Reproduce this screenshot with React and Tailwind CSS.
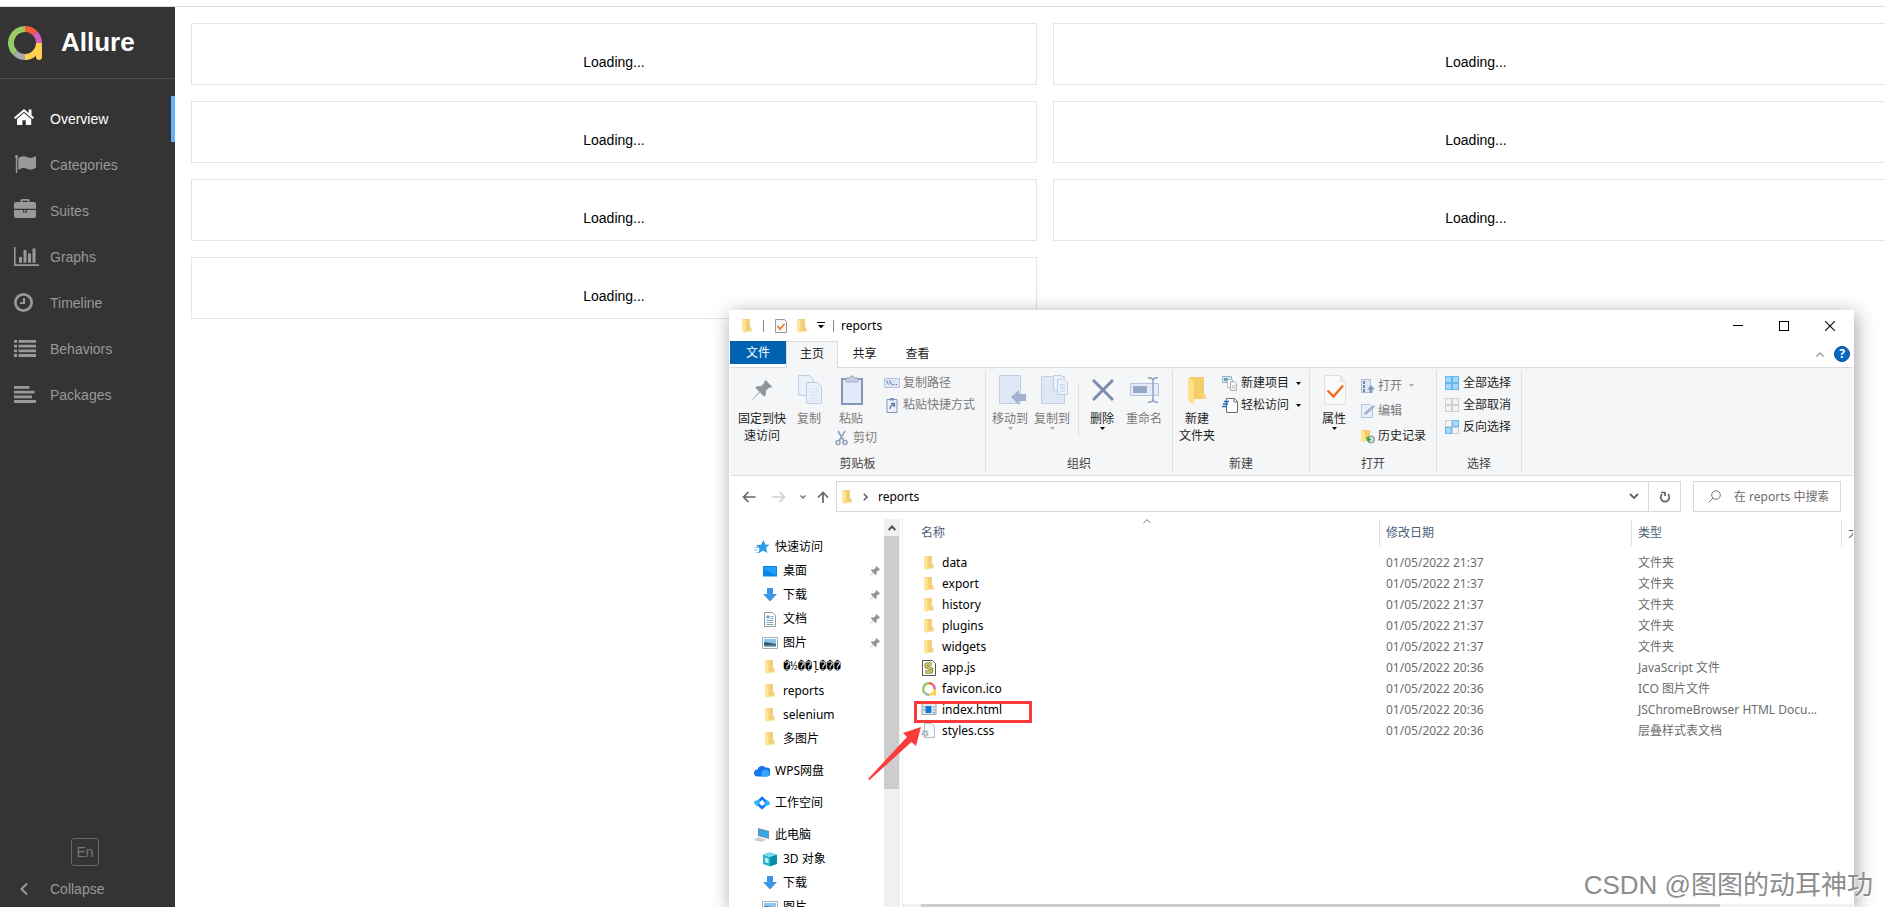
import { useState } from 'react';

// ─── Allure sidebar ───────────────────────────────────────────────────────────

function AllureLogo({ className = '' }) {
  return (
    <svg viewBox="0 0 34 34" className={className} fill="none" strokeWidth="6" aria-hidden="true">
      <path d="M7.1 26.9A14 14 0 0117 3" stroke="#97cc64" />
      <path d="M17 3a14 14 0 019.9 4.1" stroke="#fd5a3e" />
      <path d="M26.9 7.1A14 14 0 0131 17" stroke="#d35ebe" />
      <path d="M17 31a14 14 0 01-9.9-4.1" stroke="#aaa" />
      <path d="M31 17a14 14 0 01-14 14" stroke="#ffd050" />
      <path d="M31 17v14" stroke="#ffd050" />
      <circle cx="31" cy="31" r="3" fill="#ffd050" stroke="none" />
    </svg>
  );
}

const NAV_ICONS = {
  home: (
    <>
      <path d="M10 2L0 10.400l1.400 1.600L10 4.800l8.700 7.200 1.400-1.600-2.600-2.200V2.600h-2.800v3.300z" />
      <path d="M10 6l7.200 6v6h-5.400v-4.800H8.400V18H3v-6z" />
    </>
  ),
  flag: (
    <>
      <circle cx="2.500" cy="3.500" r="1.600" />
      <path d="M1.800 3.500h1.500V20H1.800z" />
      <path d="M4.300 5.200C8 3 10.500 2.800 13.500 4.300c3 1.400 5.500.5 8.500-1.200v11.600c-3 1.700-5.500 2.600-8.500 1.200-3-1.500-5.500-1.300-9.200.8z" />
    </>
  ),
  briefcase: (
    <>
      <path fillRule="evenodd" d="M6.500 3V1.500Q6.500 0 8 0h6q1.500 0 1.500 1.500V3H20q2 0 2 2v4.800H0V5q0-2 2-2zM8.200 1.700V3h5.600V1.700z" />
      <path d="M0 11h9v2.500h4V11h9v6q0 2-2 2H2q-2 0-2-2z" />
      <path d="M10 11h2v1.500h-2z" />
    </>
  ),
  chart: <path d="M0 2h1.600v17.300H25V21H0zM5 12h3v5.700H5zM9.500 5h3v12.700h-3zM14 8.500h3v9.200h-3zM18.500 3.500h3v14.200h-3z" />,
  clock: (
    <path fillRule="evenodd" d="M9.500 2a9.500 9.500 0 110 19 9.500 9.500 0 010-19zm0 2.700a6.800 6.800 0 100 13.600 6.800 6.800 0 000-13.600zM9 7h2v6H6v-1.700h3z" />
  ),
  list: (
    <path d="M0 3h3v2.800H0zM4.500 3H22v2.800H4.500zM0 7.700h3v2.800H0zM4.500 7.700H22v2.800H4.500zM0 12.400h3v2.800H0zM4.500 12.400H22v2.800H4.500zM0 17.100h3v2.800H0zM4.500 17.100H22v2.800H4.500z" />
  ),
  align: <path d="M0 3h15.500v2.800H0zM0 7.700h20.500v2.800H0zM0 12.400h18v2.800H0zM0 17.100h22v2.800H0z" />,
};

const NAV_ITEMS = [
  { label: 'Overview', icon: 'home' },
  { label: 'Categories', icon: 'flag' },
  { label: 'Suites', icon: 'briefcase' },
  { label: 'Graphs', icon: 'chart' },
  { label: 'Timeline', icon: 'clock' },
  { label: 'Behaviors', icon: 'list' },
  { label: 'Packages', icon: 'align' },
];

function Sidebar() {
  const [current, setCurrent] = useState('Overview');

  return (
    <aside className="flex w-[175px] shrink-0 flex-col bg-[#343434] text-sm text-[#999]">
      <div className="flex h-[72px] items-center gap-[19px] border-b border-[#4d4d4d] pl-2 text-white">
        <AllureLogo className="h-[34px] w-[34px]" />
        <span className="text-[26px] font-bold">Allure</span>
      </div>

      <nav className="mt-[17px] flex flex-col">
        {NAV_ITEMS.map(({ label, icon }) => (
          <a
            key={label}
            href={`#${label.toLowerCase()}`}
            onClick={() => setCurrent(label)}
            className={[
              'flex h-[46px] items-center gap-2.5 border-r-4 pl-3.5',
              current === label ? 'border-[#63b3f8] text-white' : 'border-transparent',
            ].join(' ')}
          >
            <svg viewBox="0 0 26 24" className="h-6 w-[26px]" fill="currentColor" aria-hidden="true">
              {NAV_ICONS[icon]}
            </svg>
            {label}
          </a>
        ))}
      </nav>

      <div className="mt-auto flex flex-col pb-1.5">
        <button type="button" className="ml-[71px] h-7 w-7 rounded-[3px] border border-[#6a6a6a] text-[#777]">
          En
        </button>
        <button type="button" className="mt-2.5 flex h-[25px] items-center gap-[22px] pl-5">
          <svg viewBox="0 0 8 12" className="h-3 w-2" fill="none" stroke="currentColor" strokeWidth="2" aria-hidden="true">
            <path d="M7 .5L1.500 6 7 11.500" />
          </svg>
          Collapse
        </button>
      </div>
    </aside>
  );
}

// ─── Explorer icons ───────────────────────────────────────────────────────────

function Folder({ className = 'h-4 w-4' }) {
  return (
    <svg viewBox="0 0 16 16" className={className} aria-hidden="true">
      <path d="M4 1h7v8l1.500.500V13.500H5z" fill="#f3d077" />
      <path d="M3 1l4 1.500v11L6 15l-3-1.500z" fill="#ffe59a" />
      <path d="M6 2.500h1.200v11L6 15z" fill="#f9dc8a" />
    </svg>
  );
}

function Pin({ className, color = '#8e979e' }) {
  return (
    <svg viewBox="0 0 20 20" className={className} fill={color} aria-hidden="true">
      <path d="M13.500 0L20 6.500l-1.200 1.200-1.600-.2-3.400 3.600.1 3.800-1.700 1.700-4.300-4.300L1.200 19 0 20l.9-1.400 6.400-6.800-4-4L5 6.100l3.900.2 3.500-3.500-.2-1.500z" />
    </svg>
  );
}

function Caret({ faded = false }) {
  return (
    <svg viewBox="0 0 5 3" className={faded ? 'h-[3px] w-[5px] text-[#aaa]' : 'h-[3px] w-[5px] text-black'} fill="currentColor" aria-hidden="true">
      <path d="M0 0h5L2.500 3z" />
    </svg>
  );
}

function DownArrow() {
  return (
    <svg viewBox="0 0 16 16" className="h-4 w-4" aria-hidden="true">
      <path d="M5 1h6v6h4l-7 7.500L1 7h4z" fill="#3b97e3" />
    </svg>
  );
}

function Picture() {
  return (
    <svg viewBox="0 0 16 16" className="h-4 w-4" aria-hidden="true">
      <path d="M.5 2.500h15v11H.5z" fill="#fff" stroke="#a3adb3" />
      <path d="M2 4h12v8H2z" fill="#8fc4ee" />
      <path d="M2 7.500c4-1 8 1 12 1.500v3H2z" fill="#335f6b" />
      <path d="M2 10.500h12V12H2z" fill="#7eb0c2" />
    </svg>
  );
}

const TREE_ICONS = {
  folder: <Folder />,
  down: <DownArrow />,
  picture: <Picture />,
  star: (
    <svg viewBox="0 0 16 16" className="h-4 w-4" aria-hidden="true">
      <path d="M9.500 1l1.700 4.500 4.300.3-3.400 3 1.200 5.200L9 11.500l-4.500 3 1-4.700L2 6.200l5-.5z" fill="#2b9be8" />
      <path d="M1 8.500h4M0 11h4M2 13.500h3" stroke="#8dcbf5" />
    </svg>
  ),
  desktop: (
    <svg viewBox="0 0 16 16" className="h-4 w-4" aria-hidden="true">
      <path d="M1 3h14v10.500H1z" fill="#0a86e0" />
      <path d="M2 4h12v8.500L2 6z" fill="#1fa1ff" />
    </svg>
  ),
  document: (
    <svg viewBox="0 0 16 16" className="h-4 w-4" aria-hidden="true">
      <path d="M2.500 1.500h8l3 3v11h-11z" fill="#fff" stroke="#929b9f" />
      <path d="M4.500 4.500h3v3h-3z" fill="#5c9fcd" />
      <path d="M8.500 5.500h3M8.500 7.500h3M4.500 9.500h7M4.500 11.500h7M4.500 13.500h7" stroke="#7ea4bd" />
    </svg>
  ),
  cloud: (
    <svg viewBox="0 0 16 16" className="h-4 w-4" aria-hidden="true">
      <path d="M3.500 13.500a3.500 3.500 0 010-7 4.500 4.500 0 018-2 4.600 4.600 0 012 9z" fill="#1976ee" />
      <path d="M8 13.500c-2-4 1-7.500 4.500-6.500a3.400 3.400 0 01.5 6.500z" fill="#38a6ff" />
    </svg>
  ),
  workspace: (
    <svg viewBox="0 0 16 16" className="h-4 w-4" fill="none" strokeWidth="2.600" aria-hidden="true">
      <path d="M8 3l5 5-5 5-5-5z" stroke="#1577ee" />
      <path d="M5.500 5.500L1 7.500l3 3M10.500 10.500L15 8.500l-3-3" stroke="#35b9ff" />
    </svg>
  ),
  computer: (
    <svg viewBox="0 0 16 16" className="h-4 w-4" aria-hidden="true">
      <path d="M4 1l11 3v8L4 9z" fill="#7f8c95" />
      <path d="M5 2l9 2.700v6L5 8.200z" fill="#2ea8f0" />
      <path d="M4 10l8 2.500-4 2.500-8-2z" fill="#c8ced2" />
    </svg>
  ),
  cube: (
    <svg viewBox="0 0 16 16" className="h-4 w-4" aria-hidden="true">
      <path d="M8 1l7 2.500L8 6 1 3.500z" fill="#7ed8e8" />
      <path d="M1 3.500L8 6v9.500L1 13z" fill="#29b5cf" />
      <path d="M15 3.500L8 6v9.500l7-2.500z" fill="#0b8ba8" />
      <path d="M3 6.500l3.500 1.200v4.500L3 11z" fill="#bfeef5" />
    </svg>
  ),
};

const FILE_ICONS = {
  folder: <Folder />,
  favicon: <AllureLogo className="h-3.5 w-3.5" />,
  script: (
    <svg viewBox="0 0 16 16" className="h-4 w-4" aria-hidden="true">
      <path d="M1.500.500h10l3 3v12h-13z" fill="#fff" stroke="#555" />
      <path d="M11 4H6.500c-2 0-2 3 0 3.500l3 1c2 .5 1.500 3.500-.5 3.500H4" fill="none" stroke="#6d6d30" strokeWidth="3.200" />
      <path d="M11 4H6.500c-2 0-2 3 0 3.500l3 1c2 .5 1.500 3.500-.5 3.500H4" fill="none" stroke="#e0d867" strokeWidth="1.600" />
    </svg>
  ),
  html: (
    <svg viewBox="0 0 16 16" className="h-4 w-4" aria-hidden="true">
      <path d="M1 1.500h14v11H1z" fill="#e6eaec" stroke="#9aa5ab" />
      <path d="M4.500 4h6v7h-6z" fill="#0a78dc" />
      <path d="M2 5h2M2 8h2M12 5h2M12 8h2M12 10.500h2" stroke="#8b979e" />
    </svg>
  ),
  css: (
    <svg viewBox="0 0 16 16" className="h-4 w-4" aria-hidden="true">
      <path d="M3.500.500h7l3 3v11h-10z" fill="#f9fafa" stroke="#b9bdc0" />
      <circle cx="4" cy="10.500" r="2.500" fill="none" stroke="#a9b6bf" strokeWidth="2" strokeDasharray="2 1" />
      <circle cx="4" cy="10.500" r="2" fill="none" stroke="#a9b6bf" />
    </svg>
  ),
};

// ─── Title bar and tabs ───────────────────────────────────────────────────────

function TitleBar() {
  return (
    <div className="flex h-[31px] items-center pl-[9px]">
      <Folder />
      <span className="ml-2 h-3 w-px bg-[#8a8a8a]" />
      <svg viewBox="0 0 12 14" className="ml-[11px] h-3.5 w-3" fill="none" aria-hidden="true">
        <path d="M.5.500h9l2 2v11H.5z" fill="#f7f7f7" stroke="#96999b" />
        <path d="M2.500 7l2.500 3 4.500-5" stroke="#f26a2e" strokeWidth="1.500" />
      </svg>
      <Folder className="ml-[7px] h-4 w-4" />
      <svg viewBox="0 0 8 7" className="ml-[7px] h-[7px] w-2" fill="#000" aria-hidden="true">
        <path d="M0 0h8v1H0zM1 3h6L4 6.500z" />
      </svg>
      <span className="ml-2 h-3 w-px bg-[#8a8a8a]" />
      <span className="ml-[7px]">reports</span>

      <div className="ml-auto flex h-full">
        <button type="button" aria-label="最小化" className="flex w-[46px] items-center justify-center">
          <span className="h-px w-2.5 bg-black" />
        </button>
        <button type="button" aria-label="最大化" className="flex w-[46px] items-center justify-center">
          <span className="h-2.5 w-2.5 border border-black" />
        </button>
        <button type="button" aria-label="关闭" className="flex w-[46px] items-center justify-center">
          <svg viewBox="0 0 10 10" className="h-2.5 w-2.5" stroke="#000" strokeWidth="1.100" aria-hidden="true">
            <path d="M0 0l10 10M10 0L0 10" />
          </svg>
        </button>
      </div>
    </div>
  );
}

function TabBar() {
  return (
    <div className="flex h-[26px] items-start text-[#222]">
      <button type="button" className="h-[23px] w-14 bg-[#0063b1] text-white">文件</button>
      <button type="button" className="relative -mb-px h-[27px] w-[52px] border border-b-0 border-[#dadbdc] bg-[#f5f6f7] pb-0.5">主页</button>
      <button type="button" className="h-[25px] w-[53px]">共享</button>
      <button type="button" className="h-[25px] w-[53px]">查看</button>
      <div className="ml-auto flex h-[26px] items-center gap-2.5 pr-[3px]">
        <button type="button" aria-label="最小化功能区">
          <svg viewBox="0 0 8 5" className="h-[5px] w-2" fill="none" stroke="#999" strokeWidth="1.300" aria-hidden="true">
            <path d="M.5 4.500L4 1l3.500 3.500" />
          </svg>
        </button>
        <button type="button" aria-label="帮助" className="h-4 w-4 rounded-full border border-[#084f95] bg-[#0668c4] text-xs leading-[14px] font-bold text-white">
          ?
        </button>
      </div>
    </div>
  );
}

// ─── Ribbon ───────────────────────────────────────────────────────────────────

function Group({ label, className = '', children }) {
  return (
    <section className={`flex h-[103px] shrink-0 flex-col border-r border-[#dfe0e2] ${className}`}>
      <div className="flex flex-1 items-start">{children}</div>
      <h2 className="pb-px text-center leading-4 text-[#444]">{label}</h2>
    </section>
  );
}

function BigButton({ icon, disabled = false, menu = false, className = 'w-[42px]', children }) {
  return (
    <button
      type="button"
      disabled={disabled}
      className={[
        'flex shrink-0 flex-col items-center pt-1 leading-[17px]',
        disabled ? 'text-[#7a7a7a]' : 'text-[#1e1e1e]',
        className,
      ].join(' ')}
    >
      <span className="flex h-9 items-center pb-1">{icon}</span>
      <span className="whitespace-nowrap">{children}</span>
      {menu && <Caret faded={disabled} />}
    </button>
  );
}

function SmallButton({ icon, disabled = false, menu = false, className = 'h-[22px]', children }) {
  return (
    <button
      type="button"
      disabled={disabled}
      className={[
        'flex items-center gap-[3px] whitespace-nowrap',
        disabled ? 'text-[#7a7a7a]' : 'text-[#1e1e1e]',
        className,
      ].join(' ')}
    >
      <svg viewBox="0 0 16 16" className="h-4 w-4" fill="none" aria-hidden="true">
        {icon}
      </svg>
      {children}
      {menu && <span className="pl-1"><Caret faded={disabled} /></span>}
    </button>
  );
}

function Tile({ on }) {
  const cells = [[1, 1], [8, 1], [1, 8], [8, 8]];
  return cells.map(([x, y], i) => (
    <rect
      key={i}
      x={x + 0.5}
      y={y + 0.5}
      width="6"
      height="6"
      fill={on[i] ? '#a5d8ff' : '#f3f3f3'}
      stroke={on[i] ? '#67b7ef' : '#cfcfcf'}
    />
  ));
}

function Ribbon() {
  return (
    <div className="flex h-[109px] overflow-hidden border-y border-[#dadbdc] bg-[#f5f6f7] pt-0.5">
      <Group label="剪贴板" className="w-64">
        <BigButton className="ml-2 w-12" icon={<Pin className="h-5 w-5" />}>
          固定到快<br />速访问
        </BigButton>
        <BigButton
          disabled
          className="ml-1 w-[38px]"
          icon={
            <svg viewBox="0 0 24 30" className="ml-0.5 h-[30px] w-6" fill="#eaf1fb" stroke="#bccde4" aria-hidden="true">
              <path d="M.5.500h11l4 4v16H.5z" />
              <path d="M8.500 7.500h11l4 4v17h-15z" />
              <path d="M11 14h10M11 17h10M11 20h10M11 23h10M11 26h10" stroke="#d3dff0" />
            </svg>
          }
        >
          复制
        </BigButton>
        <div className="ml-1.5 w-[50px]">
          <BigButton
            disabled
            className="w-[34px]"
            icon={
              <svg viewBox="0 0 22 30" className="ml-0.5 h-[30px] w-[22px]" aria-hidden="true">
                <path d="M1 4h20v25H1z" fill="#e3ebfa" stroke="#8195b8" strokeWidth="2" />
                <path d="M5 3h3l2-2h2l2 2h3v4H5z" fill="#c5d0e0" stroke="#9facc2" />
              </svg>
            }
          >
            粘贴
          </BigButton>
          <SmallButton
            disabled
            icon={
              <g stroke="#8fa0bb" strokeWidth="1.600">
                <path d="M4 1l6 10M11 1L5 11" />
                <circle cx="4" cy="12.500" r="2" />
                <circle cx="11" cy="12.500" r="2" />
              </g>
            }
          >
            剪切
          </SmallButton>
        </div>
        <div className="mt-0.5 flex flex-col">
          <SmallButton
            disabled
            icon={
              <>
                <path d="M.5 3.500h15v9H.5z" fill="#dce6f5" stroke="#b6c4d9" />
                <path d="M2.500 5.500l2 4M5.500 5.500l2 4M8.500 9.500h1.500M11.500 9.500H13" stroke="#5d7596" />
              </>
            }
          >
            复制路径
          </SmallButton>
          <SmallButton
            disabled
            icon={
              <>
                <path d="M3 2.500h10v13H3z" fill="#eef3fb" stroke="#8195b8" />
                <path d="M6 1h4v2.500H6z" fill="#8195b8" />
                <path d="M6 12c0-3 1-4 4-4M7 6.500h3.500V10" stroke="#5d7fae" strokeWidth="1.300" />
              </>
            }
          >
            粘贴快捷方式
          </SmallButton>
        </div>
      </Group>

      <Group label="组织" className="w-[187px]">
        <BigButton
          disabled
          menu
          className="ml-[3px] w-[42px]"
          icon={
            <svg viewBox="0 0 28 30" className="ml-1.5 h-[30px] w-7" aria-hidden="true">
              <path d="M.5.500h21v28H.5z" fill="#dde7f6" stroke="#c3d0e3" />
              <path d="M12 22l8-7v4h7v7h-7v4z" fill="#a0b2cf" />
            </svg>
          }
        >
          移动到
        </BigButton>
        <BigButton
          disabled
          menu
          icon={
            <svg viewBox="0 0 28 30" className="ml-1.5 h-[30px] w-7" fill="#eaf1fb" stroke="#c0cfe5" aria-hidden="true">
              <path d="M.5 1.500h23v27H.5z" fill="#dde7f6" />
              <path d="M12.500.500h8l3 3v12h-11z" />
              <path d="M16.500 4.500h7l3 3v12h-10zM19 10h5M19 13h5M19 16h5" />
            </svg>
          }
        >
          复制到
        </BigButton>
        <span className="mt-[13px] ml-[5px] h-[54px] w-px shrink-0 bg-[#dfe0e2]" />
        <BigButton
          menu
          className="ml-0.5 w-[42px]"
          icon={
            <svg viewBox="0 0 22 22" className="ml-0.5 h-[22px] w-[22px]" stroke="#7b8eb0" strokeWidth="3" aria-hidden="true">
              <path d="M1 1l20 20M21 1L1 21" />
            </svg>
          }
        >
          删除
        </BigButton>
        <BigButton
          disabled
          icon={
            <svg viewBox="0 0 30 26" className="ml-0.5 h-[26px] w-[30px]" fill="none" aria-hidden="true">
              <path d="M.5 6.500h28v12H.5z" fill="#e4ecf9" stroke="#b5c4dc" />
              <path d="M3 9h14v7H3z" fill="#96a9c8" />
              <path d="M18 .8c3 0 5 .7 5 2.700v19c0 2-2 2.700-5 2.700M28 .8c-3 0-5 .7-5 2.700v19c0 2 2 2.700 5 2.700" stroke="#8fa2c2" strokeWidth="1.500" />
            </svg>
          }
        >
          重命名
        </BigButton>
      </Group>

      <Group label="新建" className="w-[137px]">
        <BigButton
          className="ml-[3px] w-[42px]"
          icon={
            <svg viewBox="0 0 20 28" className="h-7 w-5" aria-hidden="true">
              <path d="M3 1h14v17l2 1v4H5z" fill="#f4cd68" />
              <path d="M1 1l6 5v20l-1 2-5-4z" fill="#ffe08a" />
              <path d="M15 17l4 2v4h-4z" fill="#f8d981" />
            </svg>
          }
        >
          新建<br />文件夹
        </BigButton>
        <div className="mt-0.5 ml-1 flex flex-col">
          <SmallButton
            menu
            icon={
              <>
                <path d="M.5 1.500h9v6h-9z" fill="#d5e9f5" stroke="#9fb5bb" />
                <path d="M2 3h4v3H2z" fill="#5fa3b0" />
                <path d="M5.500 4.500h5v8h-5z" fill="#fff" stroke="#b5bcc0" />
                <path d="M8.500 6.500h4l2 2v7h-6z" fill="#f4f7f9" stroke="#a8b0b5" />
                <path d="M10 11h3M10 13h3" stroke="#b2b8bc" />
              </>
            }
          >
            新建项目
          </SmallButton>
          <SmallButton
            menu
            icon={
              <>
                <path d="M4.500 1.500h8l3 3v11h-11z" fill="#fff" stroke="#6e6e6e" />
                <path d="M12 1.500V5h3.500" stroke="#6e6e6e" />
                <path d="M2 4.500h5M1 7h5M0 9.500h5" stroke="#1c6db5" strokeWidth="1.300" />
              </>
            }
          >
            轻松访问
          </SmallButton>
        </div>
      </Group>

      <Group label="打开" className="w-[127px]">
        <BigButton
          menu
          className="ml-[3px] w-[42px]"
          icon={
            <svg viewBox="0 0 22 30" className="ml-0.5 h-[30px] w-[22px]" fill="none" aria-hidden="true">
              <path d="M.5.500h16l5 6v23H.5z" fill="#fafafa" stroke="#e0e0e0" />
              <path d="M16.500.500v6h5" fill="#ececec" stroke="#e0e0e0" />
              <path d="M3.500 15.500l6 6L19 10.500" stroke="#f26a1e" strokeWidth="2.400" />
            </svg>
          }
        >
          属性
        </BigButton>
        <div className="mt-[3px] ml-1 flex flex-col">
          <SmallButton
            disabled
            menu
            className="h-[25px]"
            icon={
              <>
                <path d="M2.500 1.500h9v13h-9z" fill="#e1e9f5" stroke="#a9b8cf" />
                <path d="M4 3h2v3H4zM4 7h2v3H4zM4 11h2v3H4z" fill="#6c83a8" />
                <path d="M12 7l4 4.500h-2.500V15h-3v-3.500H8z" fill="#8599bb" />
              </>
            }
          >
            打开
          </SmallButton>
          <SmallButton
            disabled
            className="h-[25px]"
            icon={
              <>
                <path d="M2.500 1.500h8l3 3v10h-11z" fill="#e8effa" stroke="#b5c5de" />
                <path d="M5 12l1-3 8.500-7L16 3.500 8 11z" fill="#9fb1cf" />
              </>
            }
          >
            编辑
          </SmallButton>
          <SmallButton
            className="h-[25px]"
            icon={
              <>
                <path d="M3 2h8v11H4z" fill="#f3cd6c" />
                <path d="M2 2l4 2v11l-4-2z" fill="#ffe391" />
                <circle cx="12" cy="11.500" r="4" fill="#9aa6a8" />
                <circle cx="12" cy="11.500" r="2.400" fill="#dfe6e6" />
                <path d="M7 10l3-2v2.500h2v2h-2V15z" fill="#26a83d" />
              </>
            }
          >
            历史记录
          </SmallButton>
        </div>
      </Group>

      <Group label="选择" className="w-[85px]">
        <div className="mt-0.5 ml-[7px] flex flex-col">
          <SmallButton icon={<Tile on={[true, true, true, true]} />}>全部选择</SmallButton>
          <SmallButton icon={<Tile on={[false, false, false, false]} />}>全部取消</SmallButton>
          <SmallButton icon={<Tile on={[false, true, true, false]} />}>反向选择</SmallButton>
        </div>
      </Group>
    </div>
  );
}

// ─── Address bar ──────────────────────────────────────────────────────────────

function AddressBar() {
  return (
    <div className="flex h-[43px] items-start pt-[5px] pr-3">
      <div className="flex h-[31px] w-[106px] shrink-0 items-center pl-3">
        <button type="button" aria-label="返回">
          <svg viewBox="0 0 14 12" className="h-3 w-3.5" fill="none" stroke="#666" strokeWidth="1.700" aria-hidden="true">
            <path d="M13.500 6H1.500M6.500 1l-5 5 5 5" />
          </svg>
        </button>
        <button type="button" aria-label="前进" className="ml-4">
          <svg viewBox="0 0 14 12" className="h-3 w-3.5" fill="none" stroke="#d0d0d0" strokeWidth="1.700" aria-hidden="true">
            <path d="M.5 6h12M7.500 1l5 5-5 5" />
          </svg>
        </button>
        <button type="button" aria-label="最近浏览的位置" className="ml-3.5">
          <svg viewBox="0 0 6 4" className="h-1 w-1.5" fill="none" stroke="#777" strokeWidth="1.500" aria-hidden="true">
            <path d="M.5.500L3 3 5.500.500" />
          </svg>
        </button>
        <button type="button" aria-label="上移" className="ml-[11px]">
          <svg viewBox="0 0 12 12" className="h-3 w-3" fill="none" stroke="#666" strokeWidth="1.700" aria-hidden="true">
            <path d="M6 12V1.500M1 6.500l5-5 5 5" />
          </svg>
        </button>
      </div>

      <div className="flex h-[31px] flex-1 items-center border border-[#d9d9d9]">
        <Folder className="ml-0.5 h-4 w-4" />
        <svg viewBox="0 0 5 8" className="ml-2 h-2 w-[5px]" fill="none" stroke="#666" strokeWidth="1.600" aria-hidden="true">
          <path d="M.8.800L4 4 .8 7.200" />
        </svg>
        <span className="ml-2.5">reports</span>
        <button type="button" aria-label="以前的位置" className="mr-[9px] ml-auto">
          <svg viewBox="0 0 10 7" className="h-[7px] w-2.5" fill="none" stroke="#666" strokeWidth="1.900" aria-hidden="true">
            <path d="M1 1l4 4 4-4" />
          </svg>
        </button>
        <button type="button" aria-label="刷新" className="flex h-full w-8 items-center justify-center border-l border-[#d9d9d9]">
          <svg viewBox="0 0 12 12" className="h-3 w-3" fill="none" stroke="#666" strokeWidth="1.700" aria-hidden="true">
            <path d="M9 3.200A4.300 4.300 0 113 3.200" />
            <path d="M2 1.500h4.500M6 1v4" />
          </svg>
        </button>
      </div>

      <label className="ml-3 flex h-[31px] w-[148px] items-center border border-[#d9d9d9] pl-3.5">
        <svg viewBox="0 0 13 13" className="h-[13px] w-[13px] shrink-0" fill="none" stroke="#777" aria-hidden="true">
          <circle cx="8" cy="5" r="4.300" />
          <path d="M5 8L.5 12.500" />
        </svg>
        <input
          type="search"
          aria-label="搜索"
          placeholder="在 reports 中搜索"
          className="ml-[13px] w-full min-w-0 bg-transparent outline-none placeholder:text-[#6d6d6d]"
        />
      </label>
    </div>
  );
}

// ─── Folder tree ──────────────────────────────────────────────────────────────

const TREE = [
  {
    label: '快速访问',
    icon: 'star',
    children: [
      { label: '桌面', icon: 'desktop', pinned: true },
      { label: '下载', icon: 'down', pinned: true },
      { label: '文档', icon: 'document', pinned: true },
      { label: '图片', icon: 'picture', pinned: true },
      { label: '\uFFFD½\uFFFD\uFFFDļ\uFFFD\uFFFD\uFFFD', icon: 'folder', garbled: true },
      { label: 'reports', icon: 'folder' },
      { label: 'selenium', icon: 'folder' },
      { label: '多图片', icon: 'folder' },
    ],
  },
  { label: 'WPS网盘', icon: 'cloud', children: [] },
  { label: '工作空间', icon: 'workspace', children: [] },
  {
    label: '此电脑',
    icon: 'computer',
    children: [
      { label: '3D 对象', icon: 'cube' },
      { label: '下载', icon: 'down' },
      { label: '图片', icon: 'picture' },
    ],
  },
];

function FolderTree() {
  return (
    <nav className="flex w-[154px] shrink-0 flex-col gap-2 overflow-hidden pt-4">
      {TREE.map((root) => (
        <div key={root.label} className="shrink-0">
          <button type="button" className="flex h-6 w-full items-center gap-[5px] pl-6">
            {TREE_ICONS[root.icon]}
            {root.label}
          </button>
          {root.children.map((item) => (
            <button key={item.label} type="button" className="flex h-6 w-full items-center gap-[5px] pr-1 pl-8">
              {TREE_ICONS[item.icon]}
              <span className={item.garbled ? "font-['Liberation_Mono',monospace]" : ''}>{item.label}</span>
              {item.pinned && <Pin className="ml-auto h-[11px] w-[11px]" />}
            </button>
          ))}
        </div>
      ))}
    </nav>
  );
}

// ─── File list ────────────────────────────────────────────────────────────────

const FILES = [
  { name: 'data', icon: 'folder', date: '01/05/2022 21:37', type: '文件夹' },
  { name: 'export', icon: 'folder', date: '01/05/2022 21:37', type: '文件夹' },
  { name: 'history', icon: 'folder', date: '01/05/2022 21:37', type: '文件夹' },
  { name: 'plugins', icon: 'folder', date: '01/05/2022 21:37', type: '文件夹' },
  { name: 'widgets', icon: 'folder', date: '01/05/2022 21:37', type: '文件夹' },
  { name: 'app.js', icon: 'script', date: '01/05/2022 20:36', type: 'JavaScript 文件' },
  { name: 'favicon.ico', icon: 'favicon', date: '01/05/2022 20:36', type: 'ICO 图片文件' },
  { name: 'index.html', icon: 'html', date: '01/05/2022 20:36', type: 'JSChromeBrowser HTML Docu...' },
  { name: 'styles.css', icon: 'css', date: '01/05/2022 20:36', type: '层叠样式表文档' },
];

function HeadCell({ first = false, children }) {
  return (
    <th className="h-[33px] p-0 pb-1.5 text-left font-normal">
      <div
        className={[
          'h-[27px] overflow-hidden leading-[27px] whitespace-nowrap',
          first ? 'pl-[18px]' : 'border-l border-[#e2e2e2] pl-1.5',
        ].join(' ')}
      >
        {children}
      </div>
    </th>
  );
}

function FileList() {
  return (
    <div className="relative ml-0.5 flex min-w-0 flex-1 flex-col border-l border-[#f0f0f0]">
      <table className="w-full table-fixed border-collapse">
        <colgroup>
          <col />
          <col className="w-[252px]" />
          <col className="w-[210px]" />
          <col className="w-3" />
        </colgroup>
        <thead className="text-[#4c607a]">
          <tr>
            <HeadCell first>名称</HeadCell>
            <HeadCell>修改日期</HeadCell>
            <HeadCell>类型</HeadCell>
            <HeadCell>大小</HeadCell>
          </tr>
        </thead>
        <tbody className="text-[#6d6d6d]">
          {FILES.map((file) => (
            <tr key={file.name} className="h-[21px]">
              <td className="p-0 pl-[18px]">
                <span className="flex items-center gap-[5px] text-black">
                  <span className="flex h-4 w-4 items-center justify-center">{FILE_ICONS[file.icon]}</span>
                  {file.name}
                </span>
              </td>
              <td className="p-0 pl-[7px]">{file.date}</td>
              <td className="p-0 pl-[7px] whitespace-nowrap">{file.type}</td>
              <td className="p-0" />
            </tr>
          ))}
        </tbody>
      </table>

      {/* Sort direction marker on the name column */}
      <svg viewBox="0 0 8 5" className="absolute top-0 left-[240px] h-[5px] w-2" fill="none" stroke="#777" aria-hidden="true">
        <path d="M.5 4L4 .700 7.500 4" />
      </svg>

      <div className="mt-auto flex h-[3px] bg-[#f0f0f0] pl-[18px]">
        <span className="w-6/7 bg-[#cdcdcd]" />
      </div>
    </div>
  );
}

// ─── Explorer window ──────────────────────────────────────────────────────────

function Explorer() {
  return (
    <div className="absolute top-[310px] right-[31px] bottom-0 left-[729px] flex flex-col bg-white px-px font-['Noto_Sans','Noto_Sans_CJK_SC',sans-serif] text-xs text-black shadow-[2px_4px_18px_rgba(0,0,0,0.38)]">
      <TitleBar />
      <TabBar />
      <Ribbon />
      <AddressBar />

      <div className="flex min-h-0 flex-1">
        <FolderTree />
        <div className="flex w-4 shrink-0 flex-col bg-[#f0f0f0]">
          <button type="button" aria-label="向上滚动" className="flex h-[17px] items-center justify-center">
            <svg viewBox="0 0 8 6" className="h-1.5 w-2" fill="none" stroke="#505050" strokeWidth="1.900" aria-hidden="true">
              <path d="M.7 5L4 1.500 7.300 5" />
            </svg>
          </button>
          <span className="mr-px h-[253px] bg-[#cdcdcd]" />
        </div>
        <FileList />
      </div>

      {/* Marker around index.html */}
      <svg viewBox="0 0 166 84" className="pointer-events-none absolute top-[389px] left-[139px] h-[84px] w-[166px]" aria-hidden="true">
        <rect x="47.500" y="3.500" width="115" height="19" fill="none" stroke="#fb3a3a" strokeWidth="3" />
        <path d="M53 28L35 34l4 4L0 80l1.500 1L43.500 43l4.500 4z" fill="#fb3a3a" />
      </svg>
    </div>
  );
}

// ─── Page ─────────────────────────────────────────────────────────────────────

export default function App() {
  return (
    <div className="relative flex h-screen flex-col overflow-hidden bg-white pt-1.5 font-['Liberation_Sans','Noto_Sans_CJK_SC',sans-serif]">
      <div className="flex min-h-0 flex-1 border-t border-[#ddd]">
        <Sidebar />

        {/* Widgets run past the right edge of the window */}
        <main className="grid w-[calc(100%-151px)] shrink-0 grid-cols-2 content-start gap-4 p-4 text-sm pr-2.5">
          {Array.from({ length: 7 }, (_, i) => (
            <div key={i} className="h-[62px] border border-[#e5e5e5] pt-7 text-center text-black">
              Loading...
            </div>
          ))}
        </main>
      </div>

      <Explorer />

      <p className="pointer-events-none absolute right-3 bottom-1 text-[26px] leading-9 text-[#8d8d8d] [text-shadow:1px_1px_0_#fff]">
        CSDN @图图的动耳神功
      </p>
    </div>
  );
}
